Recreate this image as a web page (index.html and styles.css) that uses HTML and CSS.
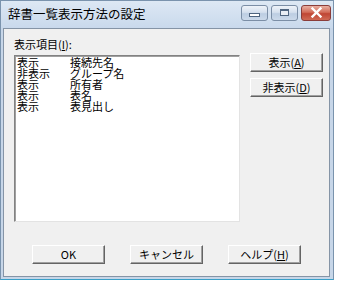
FILE: index.html
```html
<!DOCTYPE html>
<html>
	<head>
		<meta charset="utf-8" />
		<title>辞書一覧表示方法の設定</title>
		<link rel="stylesheet" href="styles.css">
	</head>
	<body>
		<div class="window">
			<!-- タイトルバー -->
			<div class="titlebar">
				<span class="title">辞書一覧表示方法の設定</span>
				<div class="caption_btns">
					<div class="cbtn cbtn_min"><i></i></div>
					<div class="cbtn cbtn_max"><i></i></div>
					<div class="cbtn cbtn_close">
						<svg width="13" height="11" viewBox="0 0 13 11">
							<path d="M2.5 1.5 L10.5 9.5 M10.5 1.5 L2.5 9.5" stroke="#fff" stroke-width="2.4" stroke-linecap="square" fill="none"/>
						</svg>
					</div>
				</div>
			</div>
			<!-- クライアント領域 -->
			<div class="client">
				<div class="label">表示項目(<u>I</u>):</div>
				<div class="main_row">
					<div class="listbox">
						<div class="row"><span class="col1">表示</span><span>接続先名</span></div>
						<div class="row"><span class="col1">非表示</span><span>グループ名</span></div>
						<div class="row"><span class="col1">表示</span><span>所有者</span></div>
						<div class="row"><span class="col1">表示</span><span>表名</span></div>
						<div class="row"><span class="col1">表示</span><span>表見出し</span></div>
					</div>
					<div class="side_btns">
						<div class="btn">表示(<u>A</u>)</div>
						<div class="btn">非表示(<u>D</u>)</div>
					</div>
				</div>
				<div class="bottom_btns">
					<div class="btn">OK</div>
					<div class="btn">キャンセル</div>
					<div class="btn">ヘルプ(<u>H</u>)</div>
				</div>
			</div>
		</div>
	</body>
</html>
```

FILE: styles.css
```css
body {
	margin: 0;
	background-color: #fff;
	font-family: "Noto Sans CJK JP", "Liberation Sans", sans-serif;
	font-size: 11px;
	color: #000;
}
.window {
	width: 332px;
	height: 278px;
	border: 1px solid #7a93ad;
	border-bottom-color: #3aa0c8;
	background: #c7d6e8;
	display: flex;
	flex-direction: column;
}
/** タイトルバー **/
.titlebar {
	height: 27px;
	display: flex;
	align-items: center;
	justify-content: space-between;
	padding-left: 7px;
	background: linear-gradient(#dde8f4, #c9d9ec);
}
.title {
	font-size: 12.5px;
	margin-top: -2px;
}
.caption_btns {
	display: flex;
	gap: 3px;
	margin-right: 2px;
	margin-top: -4px;
}
.cbtn {
	width: 25px;
	height: 14px;
	border: 1px solid #7b8ea6;
	border-radius: 3px;
	background: linear-gradient(#eef3f9, #d5e0ee 45%, #bccde2 55%, #cbd9ea);
	display: flex;
	align-items: center;
	justify-content: center;
}
.cbtn_min i {
	width: 9px;
	height: 2px;
	margin-top: 4px;
	border: 1px solid #4f6580;
	background: #fff;
}
.cbtn_max i {
	width: 7px;
	height: 4px;
	border: 1px solid #4f6580;
	border-top-width: 2px;
	background: #e9eef5;
}
.cbtn_close {
	width: 28px;
	border-color: #8a3d3a;
	background: linear-gradient(#e8b0a2, #d26c59 45%, #bf4634 55%, #cf6a55);
}
/** クライアント **/
.client {
	flex: 1;
	margin: 0 3px 2px 2px;
	border: 1px solid #8594a6;
	background: #f0f0f0;
	padding: 9px 0 0 10px;
	display: flex;
	flex-direction: column;
}
.label {
	height: 17px;
	line-height: 13px;
}
.main_row {
	display: flex;
}
.listbox {
	width: 222px;
	height: 164px;
	background: #fff;
	border: 1px solid;
	border-color: #828282 #e3e3e3 #e3e3e3 #828282;
	box-shadow: inset 1px 1px #a0a0a0;
	padding: 1px 0 0 2px;
}
.row {
	display: flex;
	height: 11px;
	line-height: 11px;
}
.col1 {
	width: 53px;
}
.side_btns {
	margin-left: 10px;
	margin-top: -2px;
	display: flex;
	flex-direction: column;
	gap: 6px;
}
.btn {
	width: 71px;
	height: 17px;
	line-height: 17px;
	text-align: center;
	background: #f0f0f0;
	border: 1px solid;
	border-color: #fff #646464 #646464 #fff;
	box-shadow: inset -1px -1px #a0a0a0;
}
.bottom_btns {
	display: flex;
	gap: 25px;
	margin: 23px 0 0 18px;
}
```
